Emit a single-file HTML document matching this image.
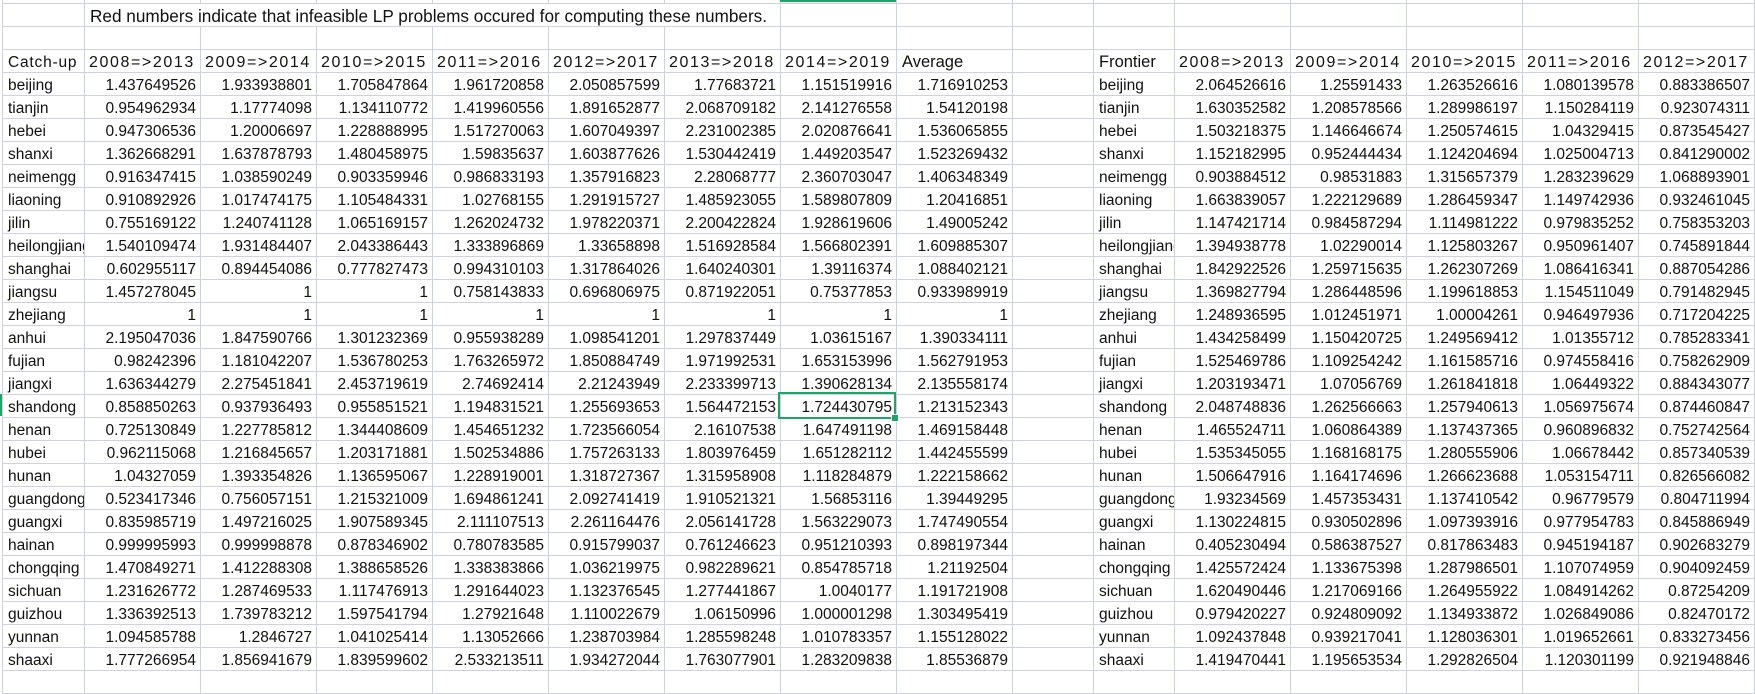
<!DOCTYPE html>
<html><head><meta charset="utf-8"><style>
html,body{margin:0;padding:0;background:#fff;width:1755px;height:672px;overflow:hidden}
table{position:absolute;left:2px;top:-20px;width:1752px;border-collapse:collapse;table-layout:fixed;font-family:"Liberation Sans",Arial,sans-serif;font-size:15.5px;color:#111}
td{border:1px solid #cdd2de;height:23px;padding:3px 4px 0 4px;line-height:19px;vertical-align:top;white-space:nowrap;overflow:hidden;text-align:right;box-sizing:border-box}
td:first-child,td.l{text-align:left;padding-left:5px}
td.h{font-size:16px;letter-spacing:1.6px;padding-left:4px}
tr{height:23px}
.sel{position:absolute;left:778px;top:392px;width:114px;height:23px;border:2px solid #21a366}
.sel:after{content:"";position:absolute;right:-5px;bottom:-5px;width:6px;height:6px;background:#21a366;border:1px solid #fff}
.gtop{position:absolute;left:780px;top:0;width:116px;height:2px;background:#21a366}
.gleft{position:absolute;left:0;top:394px;width:2px;height:22px;background:#21a366}
</style></head><body>
<table>
<colgroup><col style="width:82px"><col style="width:116px"><col style="width:116px"><col style="width:116px"><col style="width:116px"><col style="width:116px"><col style="width:116px"><col style="width:116px"><col style="width:116px"><col style="width:81px"><col style="width:81px"><col style="width:116px"><col style="width:116px"><col style="width:116px"><col style="width:116px"><col style="width:116px"><col style="width:60px"></colgroup>
<tr><td></td><td></td><td></td><td></td><td></td><td></td><td></td><td></td><td></td><td></td><td></td><td></td><td></td><td></td><td></td><td></td><td></td></tr>
<tr><td></td><td colspan="6" class="l" style="overflow:visible;font-size:17.2px">Red numbers indicate that infeasible LP problems occured for computing these numbers.</td><td></td><td></td><td></td><td></td><td></td><td></td><td></td><td></td><td></td><td></td></tr>
<tr><td></td><td></td><td></td><td></td><td></td><td></td><td></td><td></td><td></td><td></td><td></td><td></td><td></td><td></td><td></td><td></td><td></td></tr>
<tr><td style="letter-spacing:0.8px">Catch-up</td><td class="l h">2008=&gt;2013</td><td class="l h">2009=&gt;2014</td><td class="l h">2010=&gt;2015</td><td class="l h">2011=&gt;2016</td><td class="l h">2012=&gt;2017</td><td class="l h">2013=&gt;2018</td><td class="l h">2014=&gt;2019</td><td class="l" style="font-size:16.5px">Average</td><td></td><td class="l" style="font-size:16.5px">Frontier</td><td class="l h">2008=&gt;2013</td><td class="l h">2009=&gt;2014</td><td class="l h">2010=&gt;2015</td><td class="l h">2011=&gt;2016</td><td class="l h">2012=&gt;2017</td><td></td></tr>
<tr><td>beijing</td><td>1.437649526</td><td>1.933938801</td><td>1.705847864</td><td>1.961720858</td><td>2.050857599</td><td>1.77683721</td><td>1.151519916</td><td>1.716910253</td><td></td><td class="l">beijing</td><td>2.064526616</td><td>1.25591433</td><td>1.263526616</td><td>1.080139578</td><td>0.883386507</td><td></td></tr>
<tr><td>tianjin</td><td>0.954962934</td><td>1.17774098</td><td>1.134110772</td><td>1.419960556</td><td>1.891652877</td><td>2.068709182</td><td>2.141276558</td><td>1.54120198</td><td></td><td class="l">tianjin</td><td>1.630352582</td><td>1.208578566</td><td>1.289986197</td><td>1.150284119</td><td>0.923074311</td><td></td></tr>
<tr><td>hebei</td><td>0.947306536</td><td>1.20006697</td><td>1.228888995</td><td>1.517270063</td><td>1.607049397</td><td>2.231002385</td><td>2.020876641</td><td>1.536065855</td><td></td><td class="l">hebei</td><td>1.503218375</td><td>1.146646674</td><td>1.250574615</td><td>1.04329415</td><td>0.873545427</td><td></td></tr>
<tr><td>shanxi</td><td>1.362668291</td><td>1.637878793</td><td>1.480458975</td><td>1.59835637</td><td>1.603877626</td><td>1.530442419</td><td>1.449203547</td><td>1.523269432</td><td></td><td class="l">shanxi</td><td>1.152182995</td><td>0.952444434</td><td>1.124204694</td><td>1.025004713</td><td>0.841290002</td><td></td></tr>
<tr><td>neimengg</td><td>0.916347415</td><td>1.038590249</td><td>0.903359946</td><td>0.986833193</td><td>1.357916823</td><td>2.28068777</td><td>2.360703047</td><td>1.406348349</td><td></td><td class="l">neimengg</td><td>0.903884512</td><td>0.98531883</td><td>1.315657379</td><td>1.283239629</td><td>1.068893901</td><td></td></tr>
<tr><td>liaoning</td><td>0.910892926</td><td>1.017474175</td><td>1.105484331</td><td>1.02768155</td><td>1.291915727</td><td>1.485923055</td><td>1.589807809</td><td>1.20416851</td><td></td><td class="l">liaoning</td><td>1.663839057</td><td>1.222129689</td><td>1.286459347</td><td>1.149742936</td><td>0.932461045</td><td></td></tr>
<tr><td>jilin</td><td>0.755169122</td><td>1.240741128</td><td>1.065169157</td><td>1.262024732</td><td>1.978220371</td><td>2.200422824</td><td>1.928619606</td><td>1.49005242</td><td></td><td class="l">jilin</td><td>1.147421714</td><td>0.984587294</td><td>1.114981222</td><td>0.979835252</td><td>0.758353203</td><td></td></tr>
<tr><td>heilongjiang</td><td>1.540109474</td><td>1.931484407</td><td>2.043386443</td><td>1.333896869</td><td>1.33658898</td><td>1.516928584</td><td>1.566802391</td><td>1.609885307</td><td></td><td class="l">heilongjiang</td><td>1.394938778</td><td>1.02290014</td><td>1.125803267</td><td>0.950961407</td><td>0.745891844</td><td></td></tr>
<tr><td>shanghai</td><td>0.602955117</td><td>0.894454086</td><td>0.777827473</td><td>0.994310103</td><td>1.317864026</td><td>1.640240301</td><td>1.39116374</td><td>1.088402121</td><td></td><td class="l">shanghai</td><td>1.842922526</td><td>1.259715635</td><td>1.262307269</td><td>1.086416341</td><td>0.887054286</td><td></td></tr>
<tr><td>jiangsu</td><td>1.457278045</td><td>1</td><td>1</td><td>0.758143833</td><td>0.696806975</td><td>0.871922051</td><td>0.75377853</td><td>0.933989919</td><td></td><td class="l">jiangsu</td><td>1.369827794</td><td>1.286448596</td><td>1.199618853</td><td>1.154511049</td><td>0.791482945</td><td></td></tr>
<tr><td>zhejiang</td><td>1</td><td>1</td><td>1</td><td>1</td><td>1</td><td>1</td><td>1</td><td>1</td><td></td><td class="l">zhejiang</td><td>1.248936595</td><td>1.012451971</td><td>1.00004261</td><td>0.946497936</td><td>0.717204225</td><td></td></tr>
<tr><td>anhui</td><td>2.195047036</td><td>1.847590766</td><td>1.301232369</td><td>0.955938289</td><td>1.098541201</td><td>1.297837449</td><td>1.03615167</td><td>1.390334111</td><td></td><td class="l">anhui</td><td>1.434258499</td><td>1.150420725</td><td>1.249569412</td><td>1.01355712</td><td>0.785283341</td><td></td></tr>
<tr><td>fujian</td><td>0.98242396</td><td>1.181042207</td><td>1.536780253</td><td>1.763265972</td><td>1.850884749</td><td>1.971992531</td><td>1.653153996</td><td>1.562791953</td><td></td><td class="l">fujian</td><td>1.525469786</td><td>1.109254242</td><td>1.161585716</td><td>0.974558416</td><td>0.758262909</td><td></td></tr>
<tr><td>jiangxi</td><td>1.636344279</td><td>2.275451841</td><td>2.453719619</td><td>2.74692414</td><td>2.21243949</td><td>2.233399713</td><td>1.390628134</td><td>2.135558174</td><td></td><td class="l">jiangxi</td><td>1.203193471</td><td>1.07056769</td><td>1.261841818</td><td>1.06449322</td><td>0.884343077</td><td></td></tr>
<tr><td>shandong</td><td>0.858850263</td><td>0.937936493</td><td>0.955851521</td><td>1.194831521</td><td>1.255693653</td><td>1.564472153</td><td>1.724430795</td><td>1.213152343</td><td></td><td class="l">shandong</td><td>2.048748836</td><td>1.262566663</td><td>1.257940613</td><td>1.056975674</td><td>0.874460847</td><td></td></tr>
<tr><td>henan</td><td>0.725130849</td><td>1.227785812</td><td>1.344408609</td><td>1.454651232</td><td>1.723566054</td><td>2.16107538</td><td>1.647491198</td><td>1.469158448</td><td></td><td class="l">henan</td><td>1.465524711</td><td>1.060864389</td><td>1.137437365</td><td>0.960896832</td><td>0.752742564</td><td></td></tr>
<tr><td>hubei</td><td>0.962115068</td><td>1.216845657</td><td>1.203171881</td><td>1.502534886</td><td>1.757263133</td><td>1.803976459</td><td>1.651282112</td><td>1.442455599</td><td></td><td class="l">hubei</td><td>1.535345055</td><td>1.168168175</td><td>1.280555906</td><td>1.06678442</td><td>0.857340539</td><td></td></tr>
<tr><td>hunan</td><td>1.04327059</td><td>1.393354826</td><td>1.136595067</td><td>1.228919001</td><td>1.318727367</td><td>1.315958908</td><td>1.118284879</td><td>1.222158662</td><td></td><td class="l">hunan</td><td>1.506647916</td><td>1.164174696</td><td>1.266623688</td><td>1.053154711</td><td>0.826566082</td><td></td></tr>
<tr><td>guangdong</td><td>0.523417346</td><td>0.756057151</td><td>1.215321009</td><td>1.694861241</td><td>2.092741419</td><td>1.910521321</td><td>1.56853116</td><td>1.39449295</td><td></td><td class="l">guangdong</td><td>1.93234569</td><td>1.457353431</td><td>1.137410542</td><td>0.96779579</td><td>0.804711994</td><td></td></tr>
<tr><td>guangxi</td><td>0.835985719</td><td>1.497216025</td><td>1.907589345</td><td>2.111107513</td><td>2.261164476</td><td>2.056141728</td><td>1.563229073</td><td>1.747490554</td><td></td><td class="l">guangxi</td><td>1.130224815</td><td>0.930502896</td><td>1.097393916</td><td>0.977954783</td><td>0.845886949</td><td></td></tr>
<tr><td>hainan</td><td>0.999995993</td><td>0.999998878</td><td>0.878346902</td><td>0.780783585</td><td>0.915799037</td><td>0.761246623</td><td>0.951210393</td><td>0.898197344</td><td></td><td class="l">hainan</td><td>0.405230494</td><td>0.586387527</td><td>0.817863483</td><td>0.945194187</td><td>0.902683279</td><td></td></tr>
<tr><td>chongqing</td><td>1.470849271</td><td>1.412288308</td><td>1.388658526</td><td>1.338383866</td><td>1.036219975</td><td>0.982289621</td><td>0.854785718</td><td>1.21192504</td><td></td><td class="l">chongqing</td><td>1.425572424</td><td>1.133675398</td><td>1.287986501</td><td>1.107074959</td><td>0.904092459</td><td></td></tr>
<tr><td>sichuan</td><td>1.231626772</td><td>1.287469533</td><td>1.117476913</td><td>1.291644023</td><td>1.132376545</td><td>1.277441867</td><td>1.0040177</td><td>1.191721908</td><td></td><td class="l">sichuan</td><td>1.620490446</td><td>1.217069166</td><td>1.264955922</td><td>1.084914262</td><td>0.87254209</td><td></td></tr>
<tr><td>guizhou</td><td>1.336392513</td><td>1.739783212</td><td>1.597541794</td><td>1.27921648</td><td>1.110022679</td><td>1.06150996</td><td>1.000001298</td><td>1.303495419</td><td></td><td class="l">guizhou</td><td>0.979420227</td><td>0.924809092</td><td>1.134933872</td><td>1.026849086</td><td>0.82470172</td><td></td></tr>
<tr><td>yunnan</td><td>1.094585788</td><td>1.2846727</td><td>1.041025414</td><td>1.13052666</td><td>1.238703984</td><td>1.285598248</td><td>1.010783357</td><td>1.155128022</td><td></td><td class="l">yunnan</td><td>1.092437848</td><td>0.939217041</td><td>1.128036301</td><td>1.019652661</td><td>0.833273456</td><td></td></tr>
<tr><td>shaaxi</td><td>1.777266954</td><td>1.856941679</td><td>1.839599602</td><td>2.533213511</td><td>1.934272044</td><td>1.763077901</td><td>1.283209838</td><td>1.85536879</td><td></td><td class="l">shaaxi</td><td>1.419470441</td><td>1.195653534</td><td>1.292826504</td><td>1.120301199</td><td>0.921948846</td><td></td></tr>
<tr><td></td><td></td><td></td><td></td><td></td><td></td><td></td><td></td><td></td><td></td><td></td><td></td><td></td><td></td><td></td><td></td><td></td></tr>
</table>
<div class="gtop"></div>
<div class="gleft"></div>
<div class="sel"></div>
</body></html>
